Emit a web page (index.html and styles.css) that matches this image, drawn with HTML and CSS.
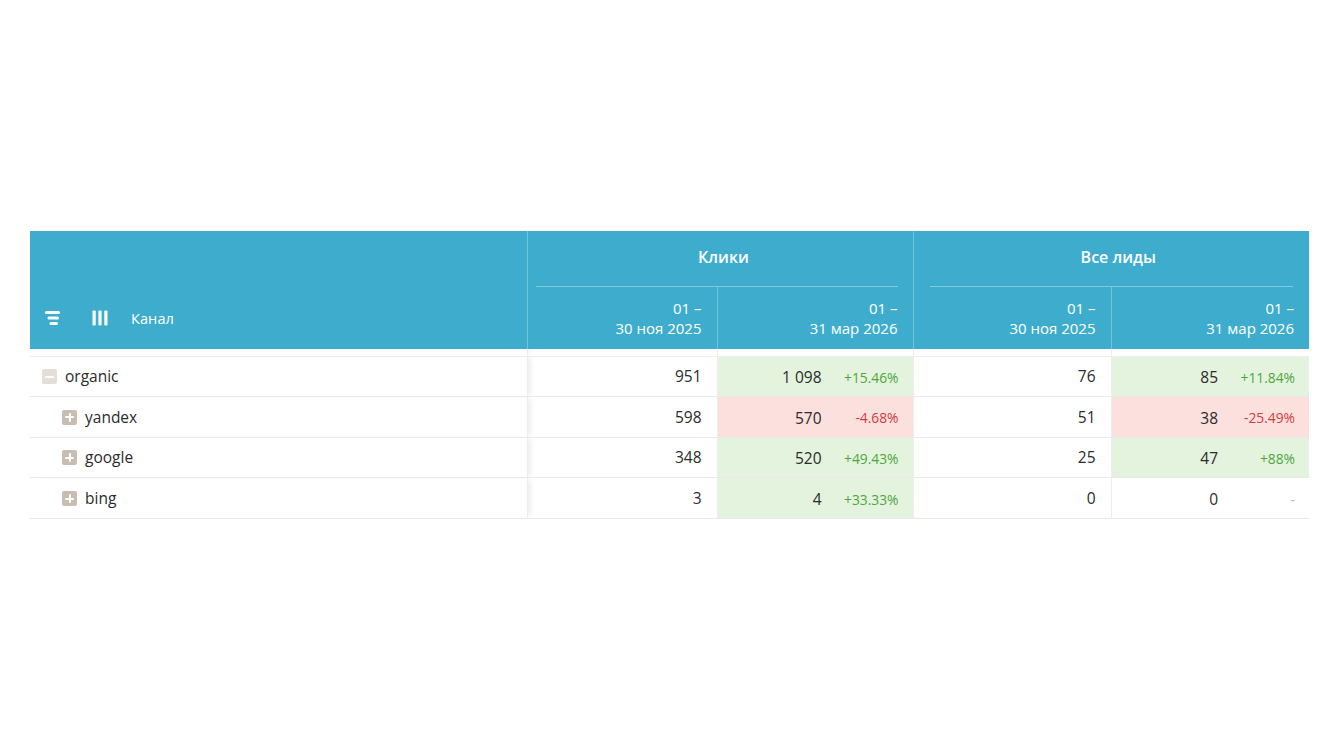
FILE: index.html
```html
<!DOCTYPE html>
<html lang="ru">
<head>
<meta charset="utf-8">
<title>Отчёт</title>
<link rel="stylesheet" href="styles.css">
</head>
<body>
<div class="wrap">
  <table class="report">
    <colgroup>
      <col class="c-name">
      <col class="c-a">
      <col class="c-b">
      <col class="c-c">
      <col class="c-d">
    </colgroup>
    <thead>
      <tr class="h1">
        <th class="name-h" rowspan="2">
          <div class="tools">
            <svg class="ico" width="18" height="18" viewBox="0 0 18 18" aria-hidden="true">
              <rect x="2" y="2" width="15" height="3" rx="1.5" fill="#fff"/>
              <rect x="4.5" y="7.5" width="11.5" height="3" rx="1.5" fill="#fff"/>
              <rect x="6.5" y="13" width="8.5" height="3" rx="1.5" fill="#fff"/>
            </svg>
            <svg class="ico ico-cols" width="18" height="18" viewBox="0 0 18 18" aria-hidden="true">
              <rect x="1.5" y="1.5" width="3.2" height="15" rx="1" fill="#fff"/>
              <rect x="7.4" y="1.5" width="3.2" height="15" rx="1" fill="#fff"/>
              <rect x="13.3" y="1.5" width="3.2" height="15" rx="1" fill="#fff"/>
            </svg>
            <span class="name-label">Канал</span>
          </div>
        </th>
        <th class="group g1" colspan="2"><div class="group-title">Клики</div></th>
        <th class="group g2" colspan="2"><div class="group-title">Все лиды</div></th>
      </tr>
      <tr class="h2">
        <th class="period">01 –<br>30 ноя 2025</th>
        <th class="period">01 –<br>31 мар 2026</th>
        <th class="period gstart">01 –<br>30 ноя 2025</th>
        <th class="period">01 –<br>31 мар 2026</th>
      </tr>
    </thead>
    <tbody>
      <tr class="spacer"><td class="name"></td><td></td><td></td><td class="gstart"></td><td></td></tr>
      <tr>
        <td class="name"><span class="tog minus"></span>organic</td>
        <td class="num">951</td>
        <td class="cmp up"><span class="v">1 098</span><span class="d">+15.46%</span></td>
        <td class="num gstart">76</td>
        <td class="cmp up"><span class="v">85</span><span class="d">+11.84%</span></td>
      </tr>
      <tr>
        <td class="name child"><span class="tog plus"></span>yandex</td>
        <td class="num">598</td>
        <td class="cmp down"><span class="v">570</span><span class="d">-4.68%</span></td>
        <td class="num gstart">51</td>
        <td class="cmp down"><span class="v">38</span><span class="d">-25.49%</span></td>
      </tr>
      <tr>
        <td class="name child"><span class="tog plus"></span>google</td>
        <td class="num">348</td>
        <td class="cmp up"><span class="v">520</span><span class="d">+49.43%</span></td>
        <td class="num gstart">25</td>
        <td class="cmp up"><span class="v">47</span><span class="d">+88%</span></td>
      </tr>
      <tr>
        <td class="name child"><span class="tog plus"></span>bing</td>
        <td class="num">3</td>
        <td class="cmp up"><span class="v">4</span><span class="d">+33.33%</span></td>
        <td class="num gstart">0</td>
        <td class="cmp none"><span class="v">0</span><span class="d">-</span></td>
      </tr>
    </tbody>
  </table>
</div>
</body>
</html>
```

FILE: styles.css
```css
* { box-sizing: border-box; }

html, body {
  margin: 0;
  padding: 0;
  background: #fff;
}

body {
  font-family: "Open Sans", "Noto Sans", "Liberation Sans", sans-serif;
  color: #2b2b2b;
}

.wrap {
  padding: 231px 0 0 30px;
}

.report {
  width: 1279px;
  border-collapse: collapse;
  table-layout: fixed;
}

.c-name { width: 497px; }
.c-a { width: 190px; }
.c-b { width: 196px; }
.c-c { width: 198px; }
.c-d { width: 198px; }

/* ---------- header ---------- */
.report thead th {
  background: #3eadcd;
  color: #fff;
  font-weight: 400;
  padding: 0;
}

.h1 { height: 56px; }
.h2 { height: 62px; }

.name-h {
  vertical-align: bottom;
  text-align: left;
  border-right: 1px solid rgba(255, 255, 255, 0.28);
}

.tools {
  display: flex;
  align-items: center;
  height: 22px;
  margin: 0 0 20px 13px;
}

.ico { display: block; }
.ico-cols { margin-left: 30px; }

.name-label {
  margin-left: 22px;
  font-size: 14.5px;
  font-weight: 500;
  letter-spacing: 0.1px;
}

.group {
  vertical-align: bottom;
  border-left: 1px solid rgba(255, 255, 255, 0.28);
}

.group-title {
  border-bottom: 1px solid rgba(255, 255, 255, 0.35);
  font-size: 16px;
  font-weight: 600;
  line-height: 20px;
  padding: 16px 0 19px 14px;
  text-align: center;
}

.g1 .group-title { margin: 0 15px 0 8px; }
.g2 .group-title { margin: 0 16px 0 16px; }

.period {
  text-align: right;
  vertical-align: middle;
  font-size: 15px;
  line-height: 20px;
  color: rgba(255, 255, 255, 0.76);
  padding-right: 15px !important;
  border-left: 1px solid rgba(255, 255, 255, 0.28);
}

/* ---------- body ---------- */
.report tbody td {
  height: 40.6px;
  padding: 0;
  border-bottom: 1px solid #e9e9ea;
  border-left: 1px solid #eeeeee;
  font-size: 15.5px;
  vertical-align: middle;
}

.report tbody tr.spacer td {
  height: 7px;
  border-bottom: 1px solid #eceef3;
}

.report tbody td.name {
  border-left: 0;
  border-right: 1px solid #ececec;
  box-shadow: 6px 0 5px -2px rgba(0, 0, 0, 0.07);
  padding-left: 12px;
  white-space: nowrap;
}

.report tbody tr.spacer td.name { padding: 0; }

.report tbody td.child { padding-left: 32px; }

.tog {
  display: inline-block;
  position: relative;
  width: 15px;
  height: 15px;
  border-radius: 2px;
  vertical-align: -2px;
  margin-right: 8px;
}

.tog::before,
.tog::after {
  content: "";
  position: absolute;
  background: #fff;
  border-radius: 1px;
}

.tog::before {
  left: 3px;
  right: 3px;
  top: 6.5px;
  height: 2px;
}

.tog.plus { background: #c9bdb1; }
.tog.plus::after {
  top: 3px;
  bottom: 3px;
  left: 6.5px;
  width: 2px;
}

.tog.minus { background: #e4ded7; }
.tog.minus::after { display: none; }

.num {
  text-align: right;
  padding-right: 15px !important;
}

.cmp {
  text-align: right;
  white-space: nowrap;
  padding-right: 14px !important;
}

.cmp .v,
.cmp .d {
  display: inline-block;
  vertical-align: middle;
}

.cmp .d {
  width: 77px;
  text-align: right;
  font-size: 13.8px;
}

.cmp.up { background: #e4f3de; }
.cmp.up .d { color: #4fa63f; }

.cmp.down { background: #fbe0de; }
.cmp.down .d { color: #d23b41; }

.cmp.none .d { color: #b5b5b5; }
```
